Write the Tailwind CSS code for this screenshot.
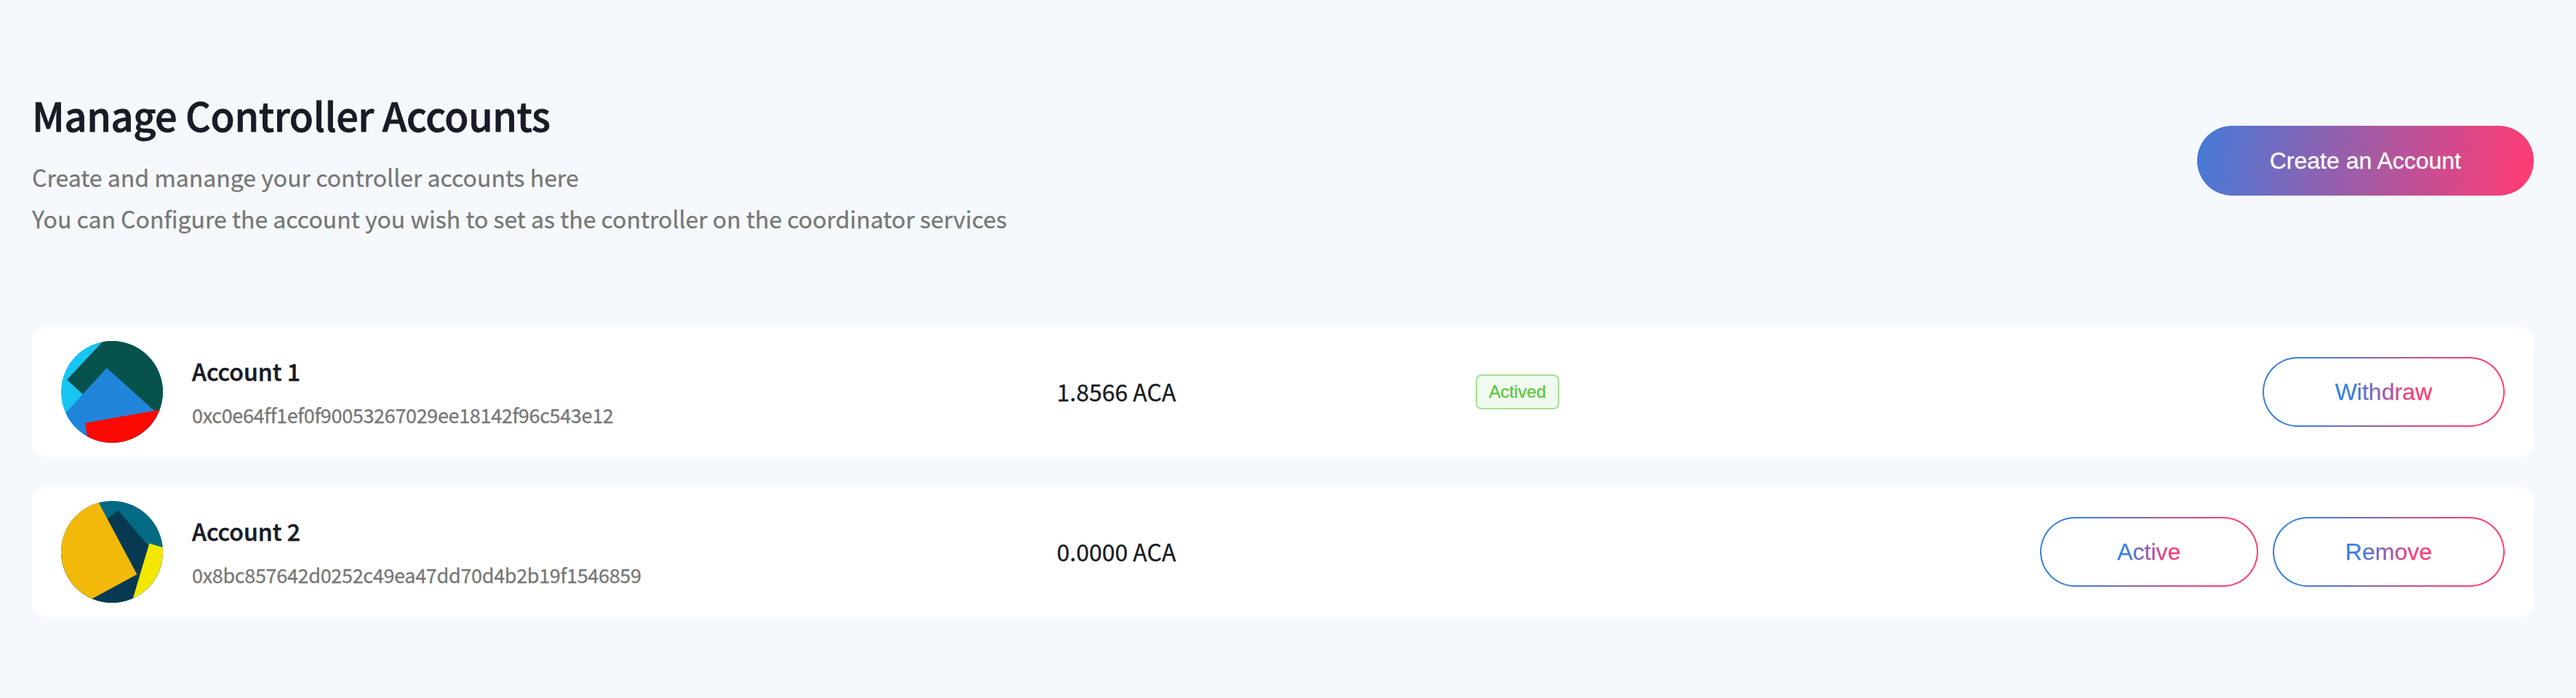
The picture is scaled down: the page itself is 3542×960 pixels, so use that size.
<!DOCTYPE html>
<html lang="en">
<head>
<meta charset="utf-8">
<title>Manage Controller Accounts</title>
<script src="https://cdn.jsdelivr.net/npm/@tailwindcss/browser@4"></script>
</head>
<body class="min-h-screen bg-[#f5f9fe] font-['Noto_Sans_CJK_SC',sans-serif] text-[#181b25] [-webkit-text-stroke:0.3px]">
<main class="pt-[113px] pl-[44px] pr-[58px]">
  <header class="flex items-center justify-between">
    <div>
      <h1 class="text-[54px] leading-[90px] font-medium tracking-[-0.37px] [-webkit-text-stroke:0.8px]">Manage Controller Accounts</h1>
      <p class="mt-3 text-[32px] leading-[57px] tracking-[-0.01px] text-[#777777]">Create and manange your controller accounts here<br>You can Configure the account you wish to set as the controller on the coordinator services</p>
    </div>
    <button class="h-[96px] rounded-full px-[100px] font-['Liberation_Sans',sans-serif] text-[32px] text-white bg-[linear-gradient(98deg,#377fdf_-7%,#ff3b74_98%)]">Create an Account</button>
  </header>

  <section class="mt-[120px] flex flex-col gap-10">
    <article class="flex h-[180px] items-center rounded-[20px] bg-white px-10">
      <div class="flex w-[1369px] shrink-0 items-center gap-10">
        <svg class="size-[140px] rounded-full" viewBox="0 0 420 420">
          <rect width="420" height="420" fill="#18c5f2"/>
          <polygon points="24,160 200,-28 450,-28 450,552" fill="#07524b"/>
          <polygon points="188,111 500,391 300,600 -100,500 -20,340" fill="#2185dc"/>
          <polygon points="99,338 450,276 450,440 115,440" fill="#fb0a03"/>
        </svg>
        <div>
          <h2 class="text-[32px] leading-[46px] font-medium [-webkit-text-stroke:0.5px]">Account 1</h2>
          <p class="mt-[18px] text-[27px] leading-10 tracking-[-0.34px] text-[#777777]">0xc0e64ff1ef0f90053267029ee18142f96c543e12</p>
        </div>
      </div>
      <p class="w-[576px] shrink-0 pb-[2px] text-[32px] leading-[46px]">1.8566 ACA</p>
      <span class="flex h-[48px] w-[115px] items-center justify-center rounded-[8px] border-2 border-[#a3e091] bg-[#f1faf0] font-['Liberation_Sans',sans-serif] text-[24px] text-[#59c837]">Actived</span>
      <div class="ml-auto flex gap-5 font-['Liberation_Sans',sans-serif] text-[32px]">
        <button class="h-[96px] min-w-[300px] rounded-full border-2 border-transparent px-[98px] [background:linear-gradient(#fff,#fff)_padding-box,linear-gradient(97deg,#377fdf_17%,#ff3b74_83%)_border-box]"><span class="bg-[linear-gradient(97deg,#377fdf_17%,#ff3b74_83%)] bg-clip-text text-transparent">Withdraw</span></button>
      </div>
    </article>

    <article class="flex h-[180px] items-center rounded-[20px] bg-white px-10">
      <div class="flex w-[1369px] shrink-0 items-center gap-10">
        <svg class="size-[140px] rounded-full" viewBox="0 0 420 420">
          <rect width="420" height="420" fill="#036a83"/>
          <polygon points="235,38 450,290 450,450 0,450 0,225" fill="#073a52"/>
          <polygon points="145,-12 313,303 90,424 -20,424 -20,-12" fill="#f2b90b"/>
          <polygon points="364,175 450,201 450,430 288,430" fill="#f4e800"/>
        </svg>
        <div>
          <h2 class="text-[32px] leading-[46px] font-medium [-webkit-text-stroke:0.5px]">Account 2</h2>
          <p class="mt-[18px] text-[27px] leading-10 tracking-[-0.32px] text-[#777777]">0x8bc857642d0252c49ea47dd70d4b2b19f1546859</p>
        </div>
      </div>
      <p class="w-[576px] shrink-0 pb-[2px] text-[32px] leading-[46px]">0.0000 ACA</p>
      <div class="ml-auto flex gap-5 font-['Liberation_Sans',sans-serif] text-[32px]">
        <button class="h-[96px] min-w-[300px] rounded-full border-2 border-transparent px-[98px] [background:linear-gradient(#fff,#fff)_padding-box,linear-gradient(97deg,#377fdf_17%,#ff3b74_83%)_border-box]"><span class="bg-[linear-gradient(97deg,#377fdf_17%,#ff3b74_83%)] bg-clip-text text-transparent">Active</span></button>
        <button class="h-[96px] min-w-[300px] rounded-full border-2 border-transparent px-[98px] [background:linear-gradient(#fff,#fff)_padding-box,linear-gradient(97deg,#377fdf_17%,#ff3b74_83%)_border-box]"><span class="bg-[linear-gradient(97deg,#377fdf_17%,#ff3b74_83%)] bg-clip-text text-transparent">Remove</span></button>
      </div>
    </article>
  </section>
</main>
</body>
</html>
